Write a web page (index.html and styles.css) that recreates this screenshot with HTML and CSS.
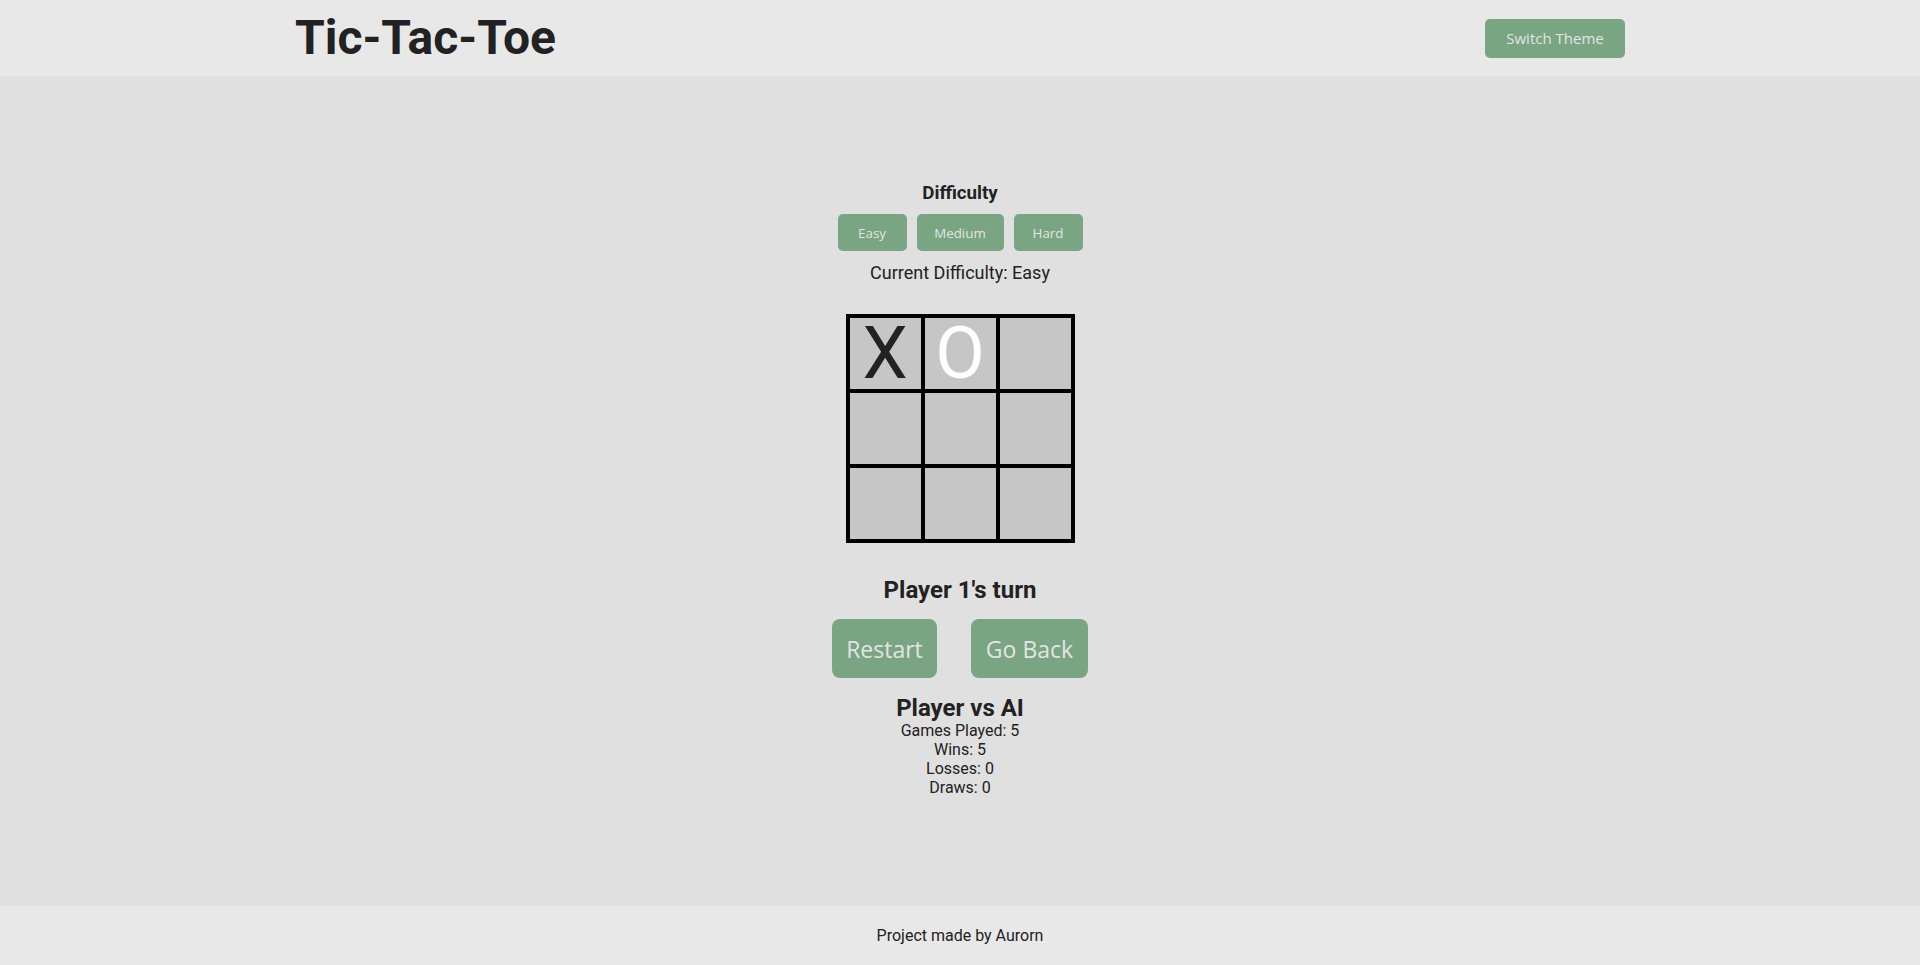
FILE: index.html
```html
<!DOCTYPE html>
<html lang="en">
<head>
<meta charset="utf-8">
<title>Tic-Tac-Toe</title>
<link rel="stylesheet" href="styles.css">
</head>
<body>
<header class="site-header">
  <div class="header-inner">
    <h1 class="title">Tic-Tac-Toe</h1>
    <button class="btn theme-btn">Switch Theme</button>
  </div>
</header>
<main class="main">
  <div class="game">
    <h3 class="difficulty-title">Difficulty</h3>
    <div class="difficulty-buttons">
      <button class="btn small-btn">Easy</button>
      <button class="btn small-btn">Medium</button>
      <button class="btn small-btn">Hard</button>
    </div>
    <p class="current-difficulty">Current Difficulty: Easy</p>
    <div class="board">
      <div class="cell x">X</div>
      <div class="cell o">O</div>
      <div class="cell"></div>
      <div class="cell"></div>
      <div class="cell"></div>
      <div class="cell"></div>
      <div class="cell"></div>
      <div class="cell"></div>
      <div class="cell"></div>
    </div>
    <h2 class="turn">Player 1's turn</h2>
    <div class="controls">
      <button class="btn big-btn">Restart</button>
      <button class="btn big-btn">Go Back</button>
    </div>
    <h2 class="mode">Player vs AI</h2>
    <div class="stats">
      <div>Games Played: 5</div>
      <div>Wins: 5</div>
      <div>Losses: 0</div>
      <div>Draws: 0</div>
    </div>
  </div>
</main>
<footer class="site-footer">Project made by Aurorn</footer>
</body>
</html>
```
FILE: styles.css
```css
* { box-sizing: border-box; }
html, body { margin: 0; padding: 0; }
body {
  font-family: Roboto, "Liberation Sans", sans-serif;
  color: #222;
  background: #e0e0e0;
  min-height: 100vh;
  display: flex;
  flex-direction: column;
}
.site-header {
  background: #e8e8e8;
  height: 76px;
  flex: 0 0 auto;
}
.header-inner {
  width: 1330px;
  margin: 0 auto;
  height: 100%;
  display: flex;
  align-items: center;
  justify-content: space-between;
}
.title {
  margin: 0;
  font-size: 48px;
  font-weight: 700;
  color: #222;
  padding-bottom: 2px;
}
.btn {
  background: #79a582;
  color: #e4e4e4;
  border: none;
  border-radius: 5px;
  font-family: "Open Sans", "DejaVu Sans", sans-serif;
  cursor: pointer;
}
.theme-btn {
  width: 140px;
  height: 39px;
  font-size: 15px;
  padding: 0;
}
.main {
  flex: 1 1 auto;
  display: flex;
  flex-direction: column;
  align-items: center;
  justify-content: center;
}
.game {
  display: flex;
  flex-direction: column;
  align-items: center;
  padding-bottom: 3px;
}
.difficulty-title {
  margin: 0;
  font-size: 18.72px;
  font-weight: 700;
}
.difficulty-buttons {
  display: flex;
  gap: 10px;
  margin-top: 10px;
}
.small-btn {
  height: 37px;
  font-size: 13.33px;
  padding: 0;
}
.small-btn:nth-child(1), .small-btn:nth-child(3) { width: 69px; }
.small-btn:nth-child(2) { width: 87px; }
.current-difficulty {
  margin: 11px 0 0;
  font-size: 18px;
}
.board {
  margin-top: 31px;
  display: grid;
  grid-template-columns: repeat(3, 75px);
  grid-template-rows: repeat(3, 75px);
  border: 2px solid #000;
}
.cell {
  background: #c6c6c6;
  border: 2px solid #000;
  display: flex;
  align-items: center;
  justify-content: center;
  font-size: 72px;
  line-height: 1;
  font-weight: 400;
}
.cell.x { color: #222; }
.cell.o { color: #fff; }
.turn {
  margin: 33px 0 0;
  font-size: 24px;
  font-weight: 700;
}
.controls {
  display: flex;
  gap: 34px;
  margin-top: 15px;
}
.big-btn {
  height: 59px;
  font-size: 23px;
  border-radius: 8px;
  padding: 0;
}
.big-btn:nth-child(1) { width: 105px; }
.big-btn:nth-child(2) { width: 117px; }
.mode {
  margin: 16px 0 0;
  font-size: 24px;
  font-weight: 700;
}
.stats {
  margin-top: -1px;
  font-size: 16px;
  text-align: center;
  line-height: 19px;
  font-weight: 400;
}
.site-footer {
  background: #e8e8e8;
  height: 59px;
  flex: 0 0 auto;
  display: flex;
  align-items: center;
  justify-content: center;
  font-size: 16px;
}
```
